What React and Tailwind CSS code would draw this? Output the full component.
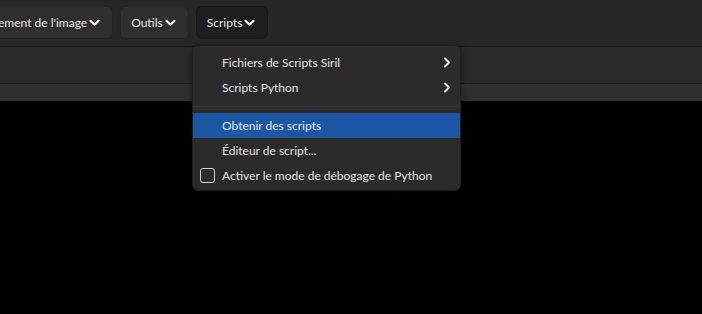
import { useState } from 'react'

function ChevronDown() {
  return (
    <svg width="11" height="8" viewBox="0 0 11 8" className="ml-[2px]">
      <polyline points="1.5,1.8 5.5,5.8 9.5,1.8" fill="none" stroke="#f2f2f2" strokeWidth="2.2" strokeLinecap="round" strokeLinejoin="round" />
    </svg>
  )
}

function ChevronRight() {
  return (
    <svg width="8" height="11" viewBox="0 0 8 11">
      <polyline points="2,1.5 6,5.5 2,9.5" fill="none" stroke="#e6e6e6" strokeWidth="1.9" strokeLinecap="round" strokeLinejoin="round" />
    </svg>
  )
}

function ToolButton({ label, active, className = '' }) {
  return (
    <div
      className={`flex items-center h-[33px] pl-[10px] pr-[12px] rounded-[6px] border text-[12px] text-[#e6e6e6] whitespace-nowrap shrink-0 ${
        active ? 'bg-[#1e1e1e] border-[#1a1a1a]' : 'bg-[#2f2f2f] border-[#232323]'
      } ${className}`}
    >
      <span>{label}</span>
      <ChevronDown />
    </div>
  )
}

function MenuItem({ label, sub, selected, check }) {
  return (
    <div className={`flex items-center h-[25px] pr-[9px] ${selected ? 'bg-[#1c57a5]' : ''}`}>
      <div className="w-[29px] shrink-0 flex justify-end pr-[7px]">
        {check && <div className="w-[15px] h-[15px] rounded-[3px] border border-[#d0d0d0]" />}
      </div>
      <span className="flex-1 whitespace-nowrap text-[12px] text-[#e4e4e4] pt-[1px]">{label}</span>
      {sub && <ChevronRight />}
    </div>
  )
}

export default function App() {
  const [debug] = useState(false)

  return (
    <div className="relative w-[702px] h-[314px] overflow-hidden bg-black" style={{ fontFamily: 'Lato, "Noto Sans", sans-serif' }}>
      <div className="h-[46px] bg-[#262626] flex items-start gap-[7px] pt-[6px]">
        <ToolButton label="ement de l'image" className="-ml-[13px]" />
        <ToolButton label="Outils" />
        <ToolButton label="Scripts" active />
      </div>
      <div className="h-[1px] bg-[#181818]" />
      <div className="h-[37px] bg-[#2a2a2a] border-b border-[#1c1c1c]" />
      <div className="h-[17px] bg-[#2f2f2f]" />

      <div className="absolute left-[192px] top-[45px] w-[269px] h-[146px] bg-[#2b2b2b] border border-[#1f1f1f] rounded-[6px] overflow-hidden pt-[4px] shadow-[0_2px_6px_rgba(0,0,0,0.5)]">
        <MenuItem label="Fichiers de Scripts Siril" sub />
        <MenuItem label="Scripts Python" sub />
        <div className="h-[13px] flex items-center">
          <div className="w-full h-[1px] bg-[#333333]" />
        </div>
        <MenuItem label="Obtenir des scripts" selected />
        <MenuItem label="Éditeur de script..." />
        <MenuItem label="Activer le mode de débogage de Python" check={!debug} />
      </div>
    </div>
  )
}
